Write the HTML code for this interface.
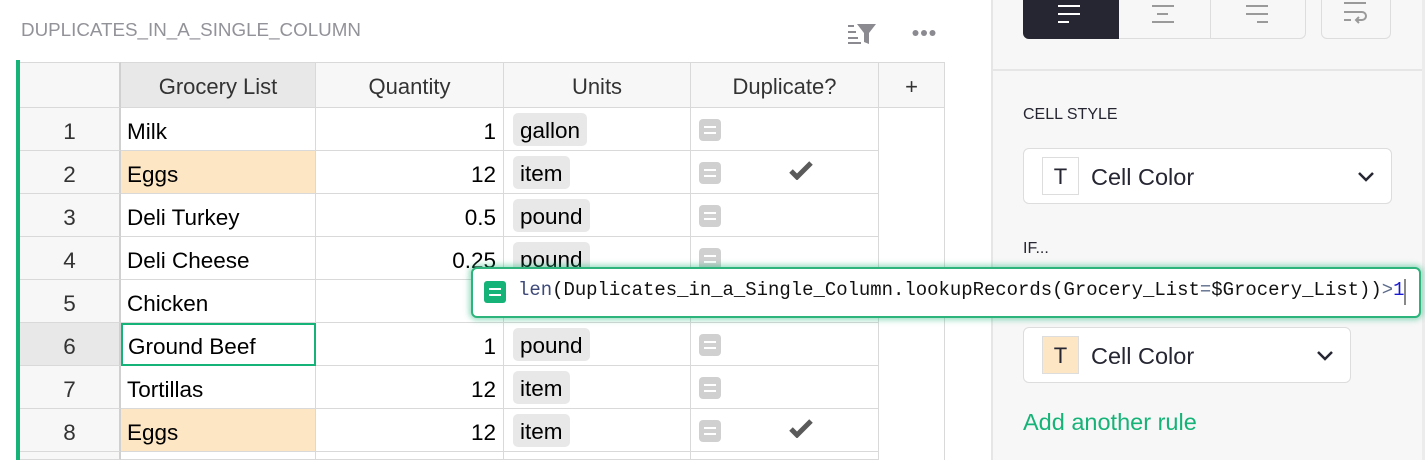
<!DOCTYPE html>
<html style="width:1425px;height:460px;overflow:hidden"><head><meta charset="utf-8"><style>
*{margin:0;padding:0;box-sizing:border-box}
body{width:1425px;height:460px;overflow:hidden;background:#fff;font-family:"Liberation Sans",sans-serif;position:relative}
.a{position:absolute}
.hd{position:absolute;top:62px;height:46px;background:#f7f7f7;border-right:1px solid #d9d9d9;border-bottom:1px solid #d9d9d9;border-top:1px solid #d9d9d9;font-size:22px;color:#333;text-align:center;line-height:47px}
.c{position:absolute;height:43px;border-right:1px solid #d9d9d9;border-bottom:1px solid #d9d9d9;font-size:22.5px;color:#000;line-height:47px;white-space:nowrap;overflow:hidden}
.rn{left:20px;width:101px;background:#f7f7f7;text-align:center;color:#333;border-right:2px solid #d0d0d0}
.g{left:121px;width:195px;padding-left:6px}
.q{left:316px;width:188px;text-align:right;padding-right:7px}
.u{left:504px;width:187px}
.d{left:691px;width:188px}
.chip{position:absolute;left:9px;top:5px;height:33px;line-height:35px;background:#e8e8e8;border-radius:5px;padding:0 7px;font-size:22.5px}
.ic{position:absolute;left:8px;top:11px;width:22px;height:22px;background:#d0d0d0;border-radius:4px}
.ic:before,.ic:after{content:"";position:absolute;left:5px;width:12px;height:2px;background:#fff}
.ic:before{top:7px}.ic:after{top:13px}
.chk{position:absolute;left:98px;top:9px}
.y{background:#fde6c4}
</style></head><body>
<div class="a" style="left:21px;top:19px;font-size:18.8px;color:#929299">DUPLICATES_IN_A_SINGLE_COLUMN</div>
<svg class="a" style="left:848px;top:22px" width="28" height="24" viewBox="0 0 28 24"><g fill="#8a8a90"><rect x="0" y="3" width="6" height="2"/><rect x="0" y="9" width="8" height="2"/><rect x="0" y="15" width="10" height="2"/><rect x="0" y="20" width="13" height="2"/><path d="M9 2h19l-7 9v11l-5-2v-9z"/></g></svg>
<svg class="a" style="left:912px;top:29px" width="24" height="8"><g fill="#8a8a90"><circle cx="3.5" cy="4" r="3"/><circle cx="12" cy="4" r="3"/><circle cx="20.5" cy="4" r="3"/></g></svg>
<div class="a" style="left:16px;top:60px;width:4px;height:400px;background:#16b378"></div>
<div class="hd" style="left:20px;width:101px;border-right:2px solid #d0d0d0"></div>
<div class="hd" style="left:121px;width:195px;background:#e8e8e8">Grocery List</div>
<div class="hd" style="left:316px;width:188px">Quantity</div>
<div class="hd" style="left:504px;width:187px">Units</div>
<div class="hd" style="left:691px;width:188px">Duplicate?</div>
<div class="hd" style="left:879px;width:66px">+</div>
<div class="a" style="left:879px;top:108px;width:66px;height:352px;border-right:1px solid #d9d9d9"></div>

<div style="position:absolute;left:0;top:108px;width:945px;height:352px;overflow:hidden">
<div class="c rn" style="top:0">1</div><div class="c g" style="top:0">Milk</div><div class="c q" style="top:0">1</div><div class="c u" style="top:0"><span class="chip">gallon</span></div><div class="c d" style="top:0"><span class="ic"></span></div>
<div class="c rn" style="top:43px">2</div><div class="c g y" style="top:43px">Eggs</div><div class="c q" style="top:43px">12</div><div class="c u" style="top:43px"><span class="chip">item</span></div><div class="c d" style="top:43px"><span class="ic"></span><svg class="chk" width="24" height="20" viewBox="0 0 24 20"><path d="M2 11l6 6L22 3" stroke="#5a5a5a" stroke-width="5" fill="none"/></svg></div>
<div class="c rn" style="top:86px">3</div><div class="c g" style="top:86px">Deli Turkey</div><div class="c q" style="top:86px">0.5</div><div class="c u" style="top:86px"><span class="chip">pound</span></div><div class="c d" style="top:86px"><span class="ic"></span></div>
<div class="c rn" style="top:129px">4</div><div class="c g" style="top:129px">Deli Cheese</div><div class="c q" style="top:129px">0.25</div><div class="c u" style="top:129px"><span class="chip">pound</span></div><div class="c d" style="top:129px"><span class="ic"></span></div>
<div class="c rn" style="top:172px">5</div><div class="c g" style="top:172px">Chicken</div><div class="c q" style="top:172px"></div><div class="c u" style="top:172px"></div><div class="c d" style="top:172px"></div>
<div class="c rn" style="top:215px;background:#e8e8e8">6</div><div class="c g" style="top:215px;border:2px solid #16b378;padding-left:5px;line-height:43px">Ground Beef</div><div class="c q" style="top:215px">1</div><div class="c u" style="top:215px"><span class="chip">pound</span></div><div class="c d" style="top:215px"><span class="ic"></span></div>
<div class="c rn" style="top:258px">7</div><div class="c g" style="top:258px">Tortillas</div><div class="c q" style="top:258px">12</div><div class="c u" style="top:258px"><span class="chip">item</span></div><div class="c d" style="top:258px"><span class="ic"></span></div>
<div class="c rn" style="top:301px">8</div><div class="c g y" style="top:301px">Eggs</div><div class="c q" style="top:301px">12</div><div class="c u" style="top:301px"><span class="chip">item</span></div><div class="c d" style="top:301px"><span class="ic"></span><svg class="chk" width="24" height="20" viewBox="0 0 24 20"><path d="M2 11l6 6L22 3" stroke="#5a5a5a" stroke-width="5" fill="none"/></svg></div>
<div class="c rn" style="top:344px;height:8px"></div><div class="c g" style="top:344px;height:8px"></div><div class="c q" style="top:344px;height:8px"></div><div class="c u" style="top:344px;height:8px"></div><div class="c d" style="top:344px;height:8px"></div>
</div>

<div class="a" style="left:991px;top:0;width:434px;height:460px;background:#f7f7f7;border-left:2px solid #e6e6e6"></div>
<div class="a" style="left:1422px;top:0;width:3px;height:460px;background:#ececec"></div>
<div class="a" style="left:1023px;top:0;width:283px;height:39px;border:1px solid #ddd;border-top:none;border-radius:0 0 6px 6px;background:#f7f7f7"></div>
<div class="a" style="left:1023px;top:0;width:96px;height:39px;background:#262633;border-radius:0 0 0 6px"></div>
<div class="a" style="left:1210px;top:0;width:1px;height:38px;background:#ddd"></div>
<svg class="a" style="left:1058px;top:3px" width="25" height="22"><g fill="#fff"><rect x="0" y="2" width="22" height="2"/><rect x="0" y="10" width="22" height="2"/><rect x="0" y="18" width="11" height="2"/></g></svg>
<svg class="a" style="left:1152px;top:3px" width="25" height="22"><g fill="#9a9a9a"><rect x="0" y="2" width="22" height="2"/><rect x="5" y="10" width="11" height="2"/><rect x="0" y="18" width="22" height="2"/></g></svg>
<svg class="a" style="left:1246px;top:3px" width="25" height="22"><g fill="#9a9a9a"><rect x="0" y="2" width="22" height="2"/><rect x="0" y="10" width="22" height="2"/><rect x="11" y="18" width="11" height="2"/></g></svg>
<div class="a" style="left:1321px;top:0;width:70px;height:39px;border:1px solid #ddd;border-top:none;border-radius:0 0 6px 6px"></div>
<svg class="a" style="left:1344px;top:0" width="26" height="26" viewBox="0 0 26 26"><g fill="none" stroke="#9a9a9a" stroke-width="2"><path d="M0 3h22"/><path d="M0 12h18a4 4 0 0 1 0 8h-6"/><path d="M15 17l-3 3 3 3"/><path d="M0 20h7"/></g></svg>
<div class="a" style="left:993px;top:69px;width:429px;height:2px;background:#e6e6e6"></div>
<div class="a" style="left:1023px;top:106px;font-size:16px;color:#262633">CELL STYLE</div>
<div class="a" style="left:1023px;top:148px;width:369px;height:56px;background:#fff;border:1px solid #ddd;border-radius:6px"></div>
<div class="a" style="left:1042px;top:157px;width:37px;height:38px;border:1px solid #ddd;background:#fff;text-align:center;line-height:38px;font-size:22px;color:#262633">T</div>
<div class="a" style="left:1091px;top:164px;font-size:23.5px;color:#262633">Cell Color</div>
<svg class="a" style="left:1357px;top:171px" width="18" height="12"><path d="M2 2l7 7 7-7" stroke="#262633" stroke-width="2.5" fill="none"/></svg>
<div class="a" style="left:1023px;top:240px;font-size:16px;color:#262633">IF...</div>
<div class="a" style="left:1023px;top:327px;width:328px;height:56px;background:#fff;border:1px solid #ddd;border-radius:6px"></div>
<div class="a" style="left:1042px;top:336px;width:37px;height:38px;border:1px solid #ddd;background:#fde6c4;text-align:center;line-height:38px;font-size:22px;color:#262633">T</div>
<div class="a" style="left:1091px;top:343px;font-size:23.5px;color:#262633">Cell Color</div>
<svg class="a" style="left:1316px;top:350px" width="18" height="12"><path d="M2 2l7 7 7-7" stroke="#262633" stroke-width="2.5" fill="none"/></svg>
<div class="a" style="left:1023px;top:409px;font-size:23.5px;color:#16b378">Add another rule</div>

<div class="a" style="left:471px;top:267px;width:950px;height:51px;background:#fff;border:2px solid #2db37c;border-radius:6px;box-shadow:0 0 6px 2px rgba(22,179,120,0.45)"></div>
<div class="a" style="left:484px;top:281px;width:22px;height:22px;background:#16b378;border-radius:3px"></div>
<div class="a" style="left:489px;top:288px;width:12px;height:2px;background:#fff"></div>
<div class="a" style="left:489px;top:294px;width:12px;height:2px;background:#fff"></div>
<div class="a" style="left:518px;top:279px;font-family:'Liberation Mono',monospace;font-size:18.95px;color:#111;white-space:pre"><span style="color:#3e4a7a">len</span>(Duplicates_in_a_Single_Column.lookupRecords(Grocery_List<span style="color:#5c6b8a">=</span>$Grocery_List))<span style="color:#5c6b8a">&gt;</span><span style="color:#1a1ad0">1</span></div>
<div class="a" style="left:1404px;top:279px;width:2px;height:26px;background:#888"></div>
</body></html>
